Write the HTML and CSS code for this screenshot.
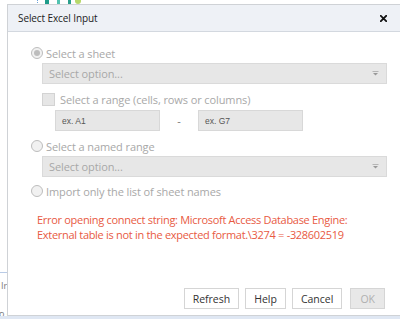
FILE: index.html
```html
<!DOCTYPE html>
<html>
<head>
<meta charset="utf-8">
<link rel="stylesheet" href="styles.css">
</head>
<body>
<div class="page">
  <div class="bg-strip">
    <span class="bar dotted"></span>
    <span class="bar teal1"></span>
    <span class="bar teal2"></span>
    <span class="bar teal3"></span>
    <span class="bar lime"></span>
  </div>
  <div class="bg-left">
    <div class="bg-line"></div>
    <div class="bg-text t1">Ir</div>
    <div class="bg-text t2">o c</div>
  </div>
  <div class="bg-bottom"></div>

  <div class="dialog">
    <div class="titlebar">
      <span class="title">Select Excel Input</span>
      <svg class="close" width="7" height="7" viewBox="0 0 7 7"><path d="M0.8 0.8 L6.2 6.2 M6.2 0.8 L0.8 6.2" stroke="#111" stroke-width="1.8" stroke-linecap="square"/></svg>
    </div>
    <div class="content">
      <div class="opt first"><span class="radio checked"></span><span>Select a sheet</span></div>
      <div class="select"><span>Select option...</span><svg class="arrow" width="7" height="5" viewBox="0 0 7 5"><path d="M0.5 0.5 H6.5" stroke="#b5b5b5" stroke-width="1"/><path d="M1 2 L6 2 L3.5 4.5 Z" fill="#999"/></svg></div>
      <div class="opt check-row"><span class="checkbox"></span><span>Select a range (cells, rows or columns)</span></div>
      <div class="range">
        <div class="input">ex. A1</div>
        <span class="dash">-</span>
        <div class="input">ex. G7</div>
      </div>
      <div class="opt second"><span class="radio"></span><span>Select a named range</span></div>
      <div class="select"><span>Select option...</span><svg class="arrow" width="7" height="5" viewBox="0 0 7 5"><path d="M0.5 0.5 H6.5" stroke="#b5b5b5" stroke-width="1"/><path d="M1 2 L6 2 L3.5 4.5 Z" fill="#999"/></svg></div>
      <div class="opt third"><span class="radio"></span><span>Import only the list of sheet names</span></div>
      <p class="error">Error opening connect string: Microsoft Access Database Engine:<br>External table is not in the expected format.\3274 = -328602519</p>
    </div>
    <div class="footer">
      <button class="btn">Refresh</button>
      <button class="btn">Help</button>
      <button class="btn">Cancel</button>
      <button class="btn disabled">OK</button>
    </div>
  </div>
</div>
</body>
</html>
```

FILE: styles.css
```css
html, body {
  margin: 0;
  padding: 0;
  background: #ffffff;
  overflow: hidden;
}
.page {
  position: relative;
  width: 400px;
  height: 319px;
  overflow: hidden;
  font-family: "Open Sans", "Noto Sans", sans-serif;
}
.bg-strip {
  position: absolute;
  left: 0;
  top: 0;
  width: 100px;
  height: 4px;
}
.bar {
  position: absolute;
  top: 0;
  height: 4px;
}
.bar.dotted { left: 37px; width: 1px; background: repeating-linear-gradient(#6aa0d8 0 1px, transparent 1px 2px); }
.bar.teal1 { left: 45px; width: 4px; background: #1f9c8a; }
.bar.teal2 { left: 57px; width: 3px; background: #52c2b0; }
.bar.teal3 { left: 68px; width: 3px; background: #2a9f8c; }
.bar.lime { left: 75px; width: 6px; background: #b6d86a; border-radius: 0 0 3px 3px; }
.bg-left {
  position: absolute;
  left: 0;
  top: 260px;
  width: 8px;
  height: 59px;
}
.bg-line {
  position: absolute;
  left: 0;
  top: 12px;
  width: 8px;
  height: 1px;
  background: #b9cbe6;
}
.bg-text {
  position: absolute;
  left: 1px;
  font-size: 9px;
  color: #777;
  white-space: nowrap;
}
.bg-text.t1 { top: 19px; }
.bg-text.t2 { top: 47px; left: -1px; }
.bg-bottom {
  position: absolute;
  left: 0;
  top: 316px;
  width: 400px;
  height: 3px;
  background: #dfe7f3;
}

.dialog {
  position: absolute;
  left: 7px;
  top: 4px;
  width: 396px;
  height: 312px;
  box-sizing: border-box;
  background: #ffffff;
  border: 1px solid #cfd2d6;
  display: flex;
  flex-direction: column;
}
.titlebar {
  height: 26px;
  border-bottom: 1px solid #d3d8df;
  background: #eef1f6;
  display: flex;
  align-items: center;
  justify-content: space-between;
  padding: 0 15px 0 10px;
}
.title {
  font-size: 10px;
  letter-spacing: -0.1px;
  color: #222;
}
.close {
  display: block;
}
.content {
  flex: 1;
  padding: 0 15px 0 23px;
  display: flex;
  flex-direction: column;
}
.opt {
  display: flex;
  align-items: center;
  height: 16px;
  font-size: 11px;
  letter-spacing: -0.1px;
  color: #a8a8a8;
  white-space: nowrap;
}
.opt.first { margin-top: 13px; }
.opt.second { margin-top: 7px; }
.opt.third { margin-top: 6px; }
.radio {
  width: 12px;
  height: 12px;
  box-sizing: border-box;
  border: 1px solid #bdbdbd;
  border-radius: 50%;
  background: #f1f1f1;
  margin-right: 3px;
  position: relative;
}
.radio.checked::after {
  content: "";
  position: absolute;
  left: 2px;
  top: 2px;
  width: 6px;
  height: 6px;
  border-radius: 50%;
  background: #bdbdbd;
}
.check-row {
  margin-top: 7px;
  margin-left: 11px;
}
.checkbox {
  width: 13px;
  height: 13px;
  box-sizing: border-box;
  border: 1px solid #d3d3d3;
  background: #e6e6e6;
  margin-right: 5px;
}
.select {
  margin-top: 2px;
  margin-left: 11px;
  height: 21px;
  box-sizing: border-box;
  border: 1px solid #dadada;
  background: #e7e7e7;
  display: flex;
  align-items: center;
  justify-content: space-between;
  padding: 0 7px 0 6px;
  font-size: 11px;
  letter-spacing: -0.1px;
  color: #a8a8a8;
}
.arrow {
  display: block;
}
.range {
  margin-top: 3px;
  margin-left: 24px;
  display: flex;
  align-items: center;
}
.input {
  width: 105px;
  height: 21px;
  box-sizing: border-box;
  border: 1px solid #d8d8d8;
  background: #e7e7e7;
  font-family: "Liberation Sans", Arial, sans-serif;
  font-size: 8.5px;
  color: #555;
  display: flex;
  align-items: center;
  padding-left: 6px;
}
.dash {
  width: 38px;
  text-align: center;
  font-size: 11px;
  color: #777;
}
.error {
  margin: 13px 0 0 6px;
  font-size: 11px;
  letter-spacing: -0.3px;
  line-height: 15px;
  color: #e85a43;
}
.footer {
  display: flex;
  justify-content: flex-end;
  gap: 6px;
  padding: 0 17px 6px 0;
}
.btn {
  height: 21px;
  box-sizing: border-box;
  border: 1px solid #d5d5d5;
  background: #ffffff;
  font-family: "Open Sans", "Noto Sans", sans-serif;
  font-size: 10.5px;
  color: #333;
  padding: 0 8px;
  margin: 0;
}
.btn.disabled {
  margin-left: 2px;
  background: #e8e8e8;
  color: #b0b0b0;
  padding: 0 9px;
}
```
